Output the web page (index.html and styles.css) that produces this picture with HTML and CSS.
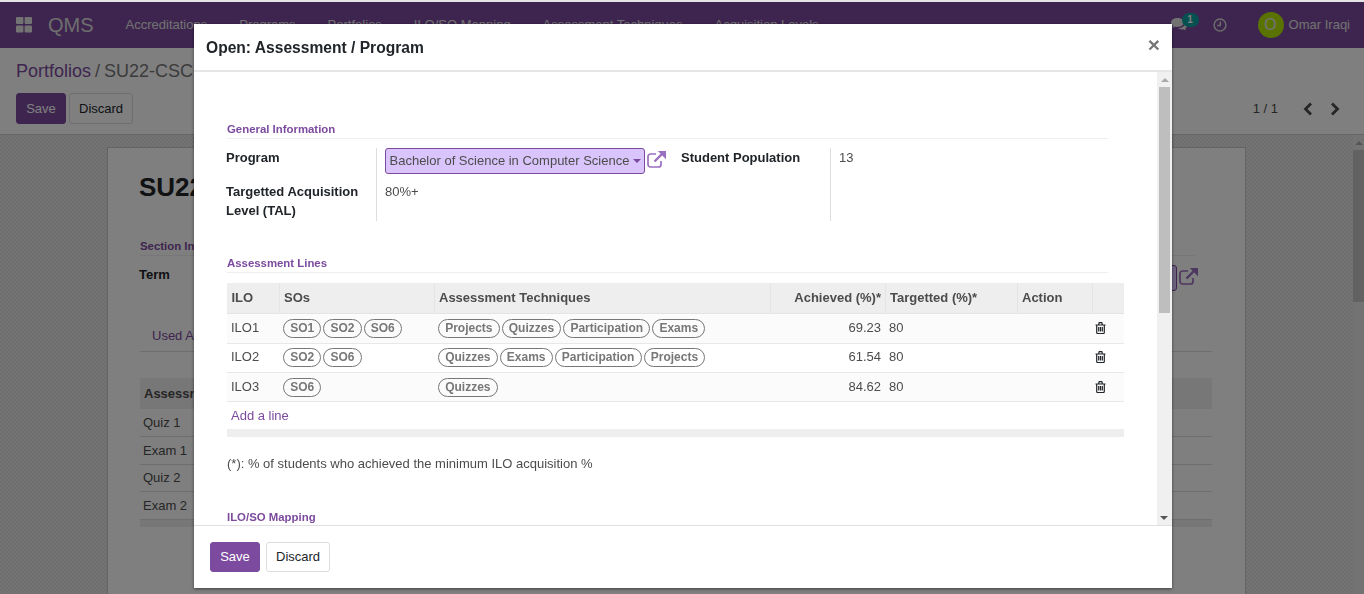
FILE: index.html
```html
<!DOCTYPE html>
<html>
<head>
    <title>QMS - Portfolios</title>
    <link rel="stylesheet" href="styles.css">
</head>
<body>
    <nav class="navbar">
        <svg class="apps-icon" width="16" height="16" viewBox="0 0 16 16"><rect width="7.4" height="7" rx="1"/><rect x="8.6" width="7.4" height="7" rx="1"/><rect y="8.4" width="7.4" height="7" rx="1"/><rect x="8.6" y="8.4" width="7.4" height="7" rx="1"/></svg>
        <span class="brand">QMS</span>
        <div class="nav-menu">
            <a>Accreditations</a>
            <a>Programs</a>
            <a>Portfolios</a>
            <a>ILO/SO Mapping</a>
            <a>Assessment Techniques</a>
            <a>Acquisition Levels</a>
        </div>
        <div class="nav-right">
            <span class="messages">
                <svg width="16" height="14" viewBox="0 0 16 14"><path d="M6.500 0C2.900 0 0 2 0 4.600c0 1.400.9 2.700 2.300 3.500-.2.600-.6 1.200-1.100 1.700 1.100-.1 2.100-.5 3-1.100.7.200 1.500.3 2.300.3 3.600 0 6.500-2 6.500-4.400C13 2 10.100 0 6.500 0z"/><path d="M14 4.800c.1.300.1.600 0 .9-.5 2.700-3.400 4.300-7 4.400 1 .9 2.500 1.400 4.100 1.400.5 0 1-.1 1.500-.2.800.6 1.600.9 2.400 1-.3-.5-.6-1-.8-1.500 1.100-.6 1.800-1.600 1.800-2.700 0-1.100-.7-2.100-2-2.800z"/></svg>
                <span class="badge">1</span>
            </span>
            <svg class="clock" width="14" height="14" viewBox="0 0 14 14"><circle cx="7" cy="7" r="5.900"/><path d="M7.300 3.500V7.500H4.200"/></svg>
            <span class="avatar">O</span>
            <span class="user-name">Omar Iraqi</span>
        </div>
    </nav>

    <div class="control-panel">
        <div class="breadcrumb"><a>Portfolios</a> / SU22-CSC201-01</div>
        <div class="cp-row">
            <button type="button" class="btn btn-primary">Save</button>
            <button type="button" class="btn btn-default">Discard</button>
            <div class="pager">
                <span>1 / 1</span>
                <svg class="chev" width="12" height="14" viewBox="0 0 12 14"><path d="M9 1.500 3.500 7 9 12.500"/></svg>
                <svg class="chev" width="12" height="14" viewBox="0 0 12 14"><path d="M3 1.500 8.500 7 3 12.500"/></svg>
            </div>
        </div>
    </div>

    <div class="content">
        <div class="sheet">
            <h1 class="sheet-title">SU22-CSC201-01</h1>
            <div class="section-title sheet-section">Section Information</div>
            <div class="term-row">
                <strong>Term</strong>
                <span class="term-box"></span>
                <svg class="ext-icon" width="19" height="17" viewBox="0 0 19 17"><path d="M14 10v3.500a2.500 2.500 0 0 1-2.500 2.500H3.500A2.500 2.500 0 0 1 1 13.500V5.500A2.500 2.500 0 0 1 3.500 3H9"/><path class="shaft" d="M7.500 10.500 15 3"/><path class="fill" d="M10.800 0H19V8.200z"/></svg>
            </div>
            <div class="tabs"><a>Used Assessments</a></div>
            <table class="bg-table">
                <thead><tr><th>Assessment</th></tr></thead>
                <tbody>
                    <tr><td>Quiz 1</td></tr>
                    <tr><td>Exam 1</td></tr>
                    <tr><td>Quiz 2</td></tr>
                    <tr><td>Exam 2</td></tr>
                </tbody>
                <tfoot><tr><td></td></tr></tfoot>
            </table>
        </div>
        <div class="page-scroll">
            <span class="arrow-up"></span>
            <span class="page-thumb"></span>
        </div>
    </div>

    <div class="overlay"></div>

    <div class="modal">
        <header class="modal-header">
            <h4>Open: Assessment / Program</h4>
            <span class="close">×</span>
        </header>
        <div class="modal-main">
            <div class="modal-body">
                <div class="section-title">General Information</div>
                <div class="info-group">
                    <div class="info-labels">
                        <label>Program</label>
                        <label class="tal">Targetted Acquisition Level (TAL)</label>
                    </div>
                    <div class="info-values">
                        <div class="program-line">
                            <span class="select-box">Bachelor of Science in Computer Science<i class="caret"></i></span>
                            <svg class="ext-icon" width="19" height="17" viewBox="0 0 19 17"><path d="M14 10v3.500a2.500 2.500 0 0 1-2.500 2.500H3.500A2.500 2.500 0 0 1 1 13.500V5.500A2.500 2.500 0 0 1 3.500 3H9"/><path class="shaft" d="M7.500 10.500 15 3"/><path class="fill" d="M10.800 0H19V8.200z"/></svg>
                        </div>
                        <div class="tal-value">80%+</div>
                    </div>
                    <div class="info-labels second">
                        <label>Student Population</label>
                    </div>
                    <div class="info-values second">13</div>
                </div>

                <div class="section-title lines-title">Assessment Lines</div>
                <table class="lines">
                    <colgroup>
                        <col class="c-ilo"><col class="c-sos"><col class="c-tech"><col class="c-ach"><col class="c-tar"><col class="c-act"><col class="c-del">
                    </colgroup>
                    <thead>
                        <tr>
                            <th>ILO</th>
                            <th>SOs</th>
                            <th>Assessment Techniques</th>
                            <th class="num">Achieved (%)*</th>
                            <th>Targetted (%)*</th>
                            <th>Action</th>
                            <th></th>
                        </tr>
                    </thead>
                    <tbody>
                        <tr class="odd first">
                            <td>ILO1</td>
                            <td><span class="tag">SO1</span><span class="tag">SO2</span><span class="tag">SO6</span></td>
                            <td><span class="tag">Projects</span><span class="tag">Quizzes</span><span class="tag">Participation</span><span class="tag">Exams</span></td>
                            <td class="num">69.23</td>
                            <td>80</td>
                            <td></td>
                            <td class="del"><svg class="trash" width="11" height="12" viewBox="0 0 11 12"><path d="M.5 3h10M1.700 3v7.500a1 1 0 0 0 1 1h5.600a1 1 0 0 0 1-1V3M3.600 3 4.200.7h2.600L7.400 3M3.700 5v4.500M5.500 5v4.500M7.300 5v4.500"/></svg></td>
                        </tr>
                        <tr class="middle">
                            <td>ILO2</td>
                            <td><span class="tag">SO2</span><span class="tag">SO6</span></td>
                            <td><span class="tag">Quizzes</span><span class="tag">Exams</span><span class="tag">Participation</span><span class="tag">Projects</span></td>
                            <td class="num">61.54</td>
                            <td>80</td>
                            <td></td>
                            <td class="del"><svg class="trash" width="11" height="12" viewBox="0 0 11 12"><path d="M.5 3h10M1.700 3v7.500a1 1 0 0 0 1 1h5.600a1 1 0 0 0 1-1V3M3.600 3 4.200.7h2.600L7.400 3M3.700 5v4.500M5.500 5v4.500M7.300 5v4.500"/></svg></td>
                        </tr>
                        <tr class="odd">
                            <td>ILO3</td>
                            <td><span class="tag">SO6</span></td>
                            <td><span class="tag">Quizzes</span></td>
                            <td class="num">84.62</td>
                            <td>80</td>
                            <td></td>
                            <td class="del"><svg class="trash" width="11" height="12" viewBox="0 0 11 12"><path d="M.5 3h10M1.700 3v7.500a1 1 0 0 0 1 1h5.600a1 1 0 0 0 1-1V3M3.600 3 4.200.7h2.600L7.400 3M3.700 5v4.500M5.500 5v4.500M7.300 5v4.500"/></svg></td>
                        </tr>
                        <tr class="add-row">
                            <td colspan="7"><a>Add a line</a></td>
                        </tr>
                    </tbody>
                    <tfoot><tr><td colspan="7"></td></tr></tfoot>
                </table>
                <p class="footnote">(*): % of students who achieved the minimum ILO acquisition %</p>
                <div class="section-title mapping-title">ILO/SO Mapping</div>
            </div>
            <div class="modal-scroll">
                <span class="arrow-up"></span>
                <span class="modal-thumb"></span>
                <span class="arrow-down"></span>
            </div>
        </div>
        <footer class="modal-footer">
            <button type="button" class="btn btn-primary">Save</button>
            <button type="button" class="btn btn-default">Discard</button>
        </footer>
    </div>
</body>
</html>
```

FILE: styles.css
```css
* {
    box-sizing: border-box;
}
html, body {
    height: 100%;
}
body {
    margin: 0;
    padding-top: 2px;
    background-color: #e4e4e4;
    color: #4c4c4c;
    font-family: "Liberation Sans", Arial, sans-serif;
    font-size: 13px;
    line-height: 1.5;
    overflow: hidden;
}
.navbar {
    display: flex;
    align-items: center;
    height: 46px;
    padding: 0 14px 0 16px;
    background-color: #7c4a9e;
    color: #fff;
}
.apps-icon {
    fill: #e6e6e6;
}
.brand {
    margin-left: 16px;
    font-size: 20px;
    color: #dcdcdc;
}
.nav-menu {
    display: flex;
    margin-left: 16px;
}
.nav-menu a {
    padding: 0 16px;
    color: #e4e4e4;
}
.nav-right {
    display: flex;
    align-items: center;
    margin-left: auto;
}
.messages {
    position: relative;
    display: block;
    width: 16px;
    height: 14px;
    margin-right: 26px;
}
.messages svg {
    display: block;
    fill: #e4e4e4;
}
.badge {
    position: absolute;
    top: -5px;
    left: 11px;
    width: 17px;
    height: 14px;
    border-radius: 8px;
    background-color: #0aa0a0;
    color: #fff;
    font-size: 10px;
    font-weight: bold;
    line-height: 14px;
    text-align: center;
}
.clock {
    fill: none;
    stroke: #d8d8d8;
    stroke-width: 1.500;
    margin-right: 31px;
}
.avatar {
    width: 26px;
    height: 26px;
    border-radius: 50%;
    background-color: #b4e600;
    color: #e6e6e6;
    font-size: 16px;
    line-height: 26px;
    text-align: center;
}
.user-name {
    margin-left: 5px;
    color: #e4e4e4;
}
.control-panel {
    height: 87px;
    padding: 10px 16px 0;
    background-color: #fff;
    border-bottom: 1px solid #ccc;
}
.breadcrumb {
    font-size: 18px;
    line-height: 27px;
    color: #777;
    word-spacing: -1px;
}
.breadcrumb a {
    color: #7c4a9e;
}
.cp-row {
    display: flex;
    align-items: center;
    margin-top: 8px;
}
.cp-row .btn-default {
    margin-left: 3px;
}
.pager {
    display: flex;
    align-items: center;
    margin-left: auto;
    margin-right: 7px;
    color: #4c4c4c;
}
.chev {
    margin-left: 15px;
    fill: none;
    stroke: #4c4c4c;
    stroke-width: 2.800;
}
.pager span {
    margin-right: 9px;
}
.btn {
    height: 31px;
    padding: 0 9px;
    border-radius: 3px;
    border: 1px solid #ddd;
    font-family: inherit;
    font-size: 13px;
}
.btn-primary {
    width: 50px;
    padding: 0;
    background-color: #7c4a9e;
    border-color: #7c4a9e;
    color: #fff;
}
.btn-default {
    background-color: #fff;
    color: #212529;
}
.content {
    position: relative;
    display: flex;
    height: 459px;
    padding-top: 12px;
    overflow: hidden;
    background-color: #e2e2e2;
    background-image: conic-gradient(#dcdcdc 25%, #e8e8e8 0 50%, #dcdcdc 0 75%, #e8e8e8 0);
    background-size: 4px 4px;
}
.sheet {
    flex: none;
    width: 1139px;
    height: 700px;
    margin-left: 107px;
    padding: 0 33px 0 32px;
    background-color: #fff;
    border: 1px solid #c8c8c8;
}
.sheet-title {
    margin: 21px 0 0 -1px;
    font-size: 26px;
    line-height: 36px;
    color: #212529;
    white-space: nowrap;
}
.section-title {
    border-bottom: 1px solid #eee;
    color: #7c4a9e;
    font-size: 11.4px;
    font-weight: bold;
    line-height: 16px;
}
.sheet-section {
    margin: 33px 0 0;
    padding-bottom: 1px;
    width: 1055px;
}
.term-row {
    display: flex;
    align-items: flex-start;
    margin: 9px 0 0 -1px;
    color: #212529;
}
.term-box {
    width: 20px;
    height: 26px;
    margin-left: auto;
    margin-right: 2px;
    background-color: #d9c5fb;
    border: 1px solid #7c4a9e;
    border-radius: 3px;
}
.term-row .ext-icon {
    margin-right: 14px;
    margin-top: 3px;
}
.ext-icon {
    flex: none;
    fill: none;
    stroke: #9b6fc0;
    stroke-width: 1.700;
}
.ext-icon .shaft {
    stroke-width: 2.400;
}
.ext-icon .fill {
    fill: #9b6fc0;
    stroke: none;
}
.tabs {
    height: 41px;
    margin-top: 20px;
    padding: 15px 0 0 12px;
    border-bottom: 1px solid #ddd;
    color: #7c4a9e;
}
.bg-table {
    width: 100%;
    margin-top: 26px;
    border-collapse: collapse;
}
.bg-table th {
    height: 31px;
    padding: 0 4px;
    background-color: #eee;
    text-align: left;
}
.bg-table td {
    height: 27.5px;
    padding: 0 3px;
    border-bottom: 1px solid #ddd;
}
.bg-table tfoot td {
    height: 8px;
    padding: 0;
    background-color: #eee;
    border: 0;
}
.page-scroll {
    position: absolute;
    top: 0;
    right: 0;
    width: 11px;
    height: 100%;
    background-color: #e6e6e6;
}
.page-thumb {
    display: block;
    height: 152px;
    margin-top: 5px;
    background-color: #c4c4c4;
}
.page-scroll .arrow-up {
    margin: 6px auto 0;
}
.arrow-up, .arrow-down {
    display: block;
    width: 0;
    height: 0;
    border-left: 4px solid transparent;
    border-right: 4px solid transparent;
}
.arrow-up {
    border-bottom: 4px solid #aaa;
}
.arrow-down {
    border-top: 4px solid #555;
}
.overlay {
    position: fixed;
    top: 2px;
    left: 0;
    right: 0;
    bottom: 0;
    background-color: rgba(0,0,0,0.5);
}
.modal {
    position: fixed;
    top: 24px;
    left: 194px;
    width: 978px;
    height: 564px;
    display: flex;
    flex-direction: column;
    background-color: #fff;
    box-shadow: 0 1px 3px rgba(0,0,0,0.5);
}
.modal-header {
    display: flex;
    justify-content: space-between;
    flex: none;
    height: 48px;
    padding: 13px 12px 0;
    border-bottom: 2px solid #e6e6e6;
}
.modal-header h4 {
    margin: 0;
    color: #212529;
    font-size: 15.6px;
    font-weight: bold;
    line-height: 22px;
}
.close {
    color: #777;
    font-size: 21px;
    font-weight: bold;
    line-height: 16px;
}
.modal-main {
    flex: 1;
    display: flex;
    min-height: 0;
}
.modal-body {
    flex: 1;
    min-width: 0;
    padding: 49px 33px 0;
    overflow: hidden;
}
.modal-body .section-title {
    width: 881px;
    padding-bottom: 1px;
}
.info-group {
    display: flex;
    align-items: flex-start;
    margin-top: 9px;
    color: #4c4c4c;
}
.info-labels {
    width: 151px;
    height: 73px;
    margin-left: -1px;
    color: #212529;
    font-weight: bold;
    border-right: 1px solid #ddd;
    line-height: 19px;
}
.info-labels label {
    display: block;
}
.tal {
    margin-top: 15px;
    width: 140px;
}
.info-values {
    width: 304px;
    padding-left: 8px;
}
.program-line {
    display: flex;
    align-items: center;
    height: 26px;
}
.select-box {
    display: flex;
    align-items: center;
    height: 26px;
    padding: 0 3px 0 3.5px;
    width: 260px;
    background-color: #d9c5fb;
    border: 1px solid #7c4a9e;
    border-radius: 3px;
    color: #4c4c4c;
    white-space: nowrap;
}
.caret {
    width: 0;
    height: 0;
    margin-left: 4px;
    border-left: 4px solid transparent;
    border-right: 4px solid transparent;
    border-top: 4px solid #7c4a9e;
}
.program-line .ext-icon {
    margin-left: 2px;
    margin-top: -3px;
}
.tal-value {
    margin-top: 8px;
    line-height: 19px;
}
.info-labels.second {
    width: 150px;
    margin-left: 0;
}
.info-values.second {
    line-height: 19px;
    width: auto;
}
.lines-title {
    margin-top: 34px;
}
.lines {
    width: 897px;
    margin-top: 10px;
    border-collapse: collapse;
    table-layout: fixed;
}
.c-ilo { width: 52px; }
.c-sos { width: 155px; }
.c-tech { width: 336px; }
.c-ach { width: 115px; }
.c-tar { width: 132px; }
.c-act { width: 75px; }
.c-del { width: 32px; }
.lines th {
    height: 30px;
    padding: 0 4px 0 4.5px;
    background-color: #eee;
    border-left: 1px solid #e4e4e4;
    border-bottom: 1px solid #e4e4e4;
    text-align: left;
    font-weight: bold;
}
.lines th:first-child {
    border-left: 0;
}
.lines th.num {
    padding-right: 3.5px;
}
.lines td {
    height: 29px;
    padding: 0 4px;
    border-bottom: 1px solid #e8e8e8;
    white-space: nowrap;
}
.lines .first td {
    height: 30px;
}
.lines .middle td {
    padding-bottom: 1px;
}
.lines tr.odd td {
    background-color: #fbfbfb;
}
.lines .num {
    text-align: right;
}
.lines .del {
    padding-left: 3px;
}
.trash {
    display: block;
    fill: none;
    stroke: #212529;
    stroke-width: 1.200;
}
.tag {
    display: inline-block;
    height: 19px;
    margin-right: 2px;
    padding: 0 6.15px;
    border: 1px solid #777;
    border-radius: 10px;
    color: #777;
    font-size: 12px;
    font-weight: bold;
    line-height: 17px;
    vertical-align: middle;
}
.lines .add-row td {
    height: 28px;
    border: 0;
}
.add-row a {
    color: #7c4a9e;
}
.lines tfoot td {
    height: 8px;
    padding: 0;
    background-color: #eee;
    border: 0;
}
.footnote {
    margin: 17px 0 0;
    line-height: 20px;
}
.modal-body .mapping-title {
    margin-top: 35px;
}
.modal-scroll {
    flex: none;
    width: 15px;
    position: relative;
    background-color: #f0f0f0;
    padding: 6px 2px 0;
}
.modal-scroll .arrow-up {
    margin: 0 auto;
}
.modal-thumb {
    display: block;
    height: 226px;
    margin-top: 5px;
    background-color: #bebebe;
}
.modal-scroll .arrow-down {
    position: absolute;
    bottom: 5px;
    left: 3px;
}
.modal-footer {
    flex: none;
    height: 63px;
    padding: 16px 16px 0;
    border-top: 1px solid #e0e0e0;
    display: flex;
    gap: 6px;
}
.modal-footer .btn {
    height: 30px;
    padding-bottom: 1px;
}
```
